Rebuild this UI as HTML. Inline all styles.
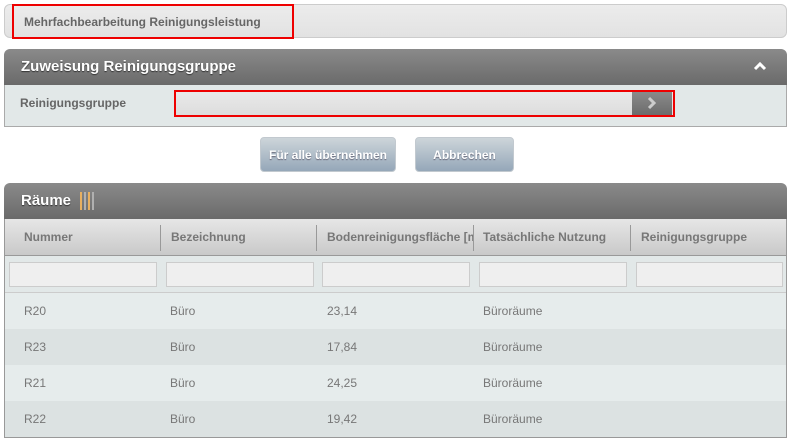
<!DOCTYPE html>
<html><head><meta charset="utf-8"><style>
*{box-sizing:border-box;margin:0;padding:0}
body{width:790px;height:440px;background:#fff;font-family:"Liberation Sans",Arial,sans-serif;position:relative;overflow:hidden}
.abs{position:absolute}
.top{left:4px;top:4px;width:783px;height:34px;background:linear-gradient(#ececec,#e2e2e2);border:1px solid #ccc;border-radius:6px}
.red{border:2px solid #e00}
.hdr{left:4px;width:783px;height:36px;background:linear-gradient(#8a8a8a,#6a6a6a);border-radius:6px 6px 0 0;color:#fff;font-weight:bold;font-size:15px;padding-left:17px;line-height:36px;text-shadow:0 1px 1px #333}
.btn{top:137px;height:35px;border-radius:4px;background:linear-gradient(#cdd5da,#95a7b9);border:1px solid #c2c9cf;color:#fff;font-weight:bold;font-size:12px;text-align:center;line-height:35px;text-shadow:0 1px 1px #667}
.col{position:absolute;top:0;height:37px;line-height:37px;font-size:12px;font-weight:bold;color:#777;padding-left:20px}
.sep{position:absolute;top:6px;width:1px;height:26px;background:#999}
.fi{position:absolute;top:6px;height:25px;background:#efefef;border:1px solid #ccc}
.row{position:absolute;left:0;width:781px;height:36px;font-size:12px;color:#777;line-height:36px}
.row span{position:absolute}
</style></head><body>
<div class="abs top"></div>
<div class="abs red" style="left:12px;top:4px;width:282px;height:35px"></div>
<div class="abs" style="left:24px;top:15px;font-size:12px;font-weight:bold;color:#666">Mehrfachbearbeitung Reinigungsleistung</div>

<div class="abs hdr" style="top:49px">Zuweisung Reinigungsgruppe</div>
<svg class="abs" style="left:752px;top:60px" width="16" height="12"><path d="M3 9 L8 4 L13 9" stroke="#fff" stroke-width="3" fill="none"/></svg>
<div class="abs" style="left:4px;top:85px;width:783px;height:42px;background:#e2e8e8;border:1px solid #aaa;border-top:none"></div>
<div class="abs" style="left:20px;top:96px;font-size:12px;font-weight:bold;color:#666">Reinigungsgruppe</div>
<div class="abs" style="left:174px;top:90px;width:501px;height:27px;background:linear-gradient(#eaeaea,#dcdcdc)"></div>
<div class="abs" style="left:632px;top:92px;width:40px;height:23px;background:linear-gradient(#8a8a8a,#6c6c6c)"></div>
<svg class="abs" style="left:645px;top:96px" width="14" height="14"><path d="M4 2 L9 7 L4 12" stroke="#ccc" stroke-width="3" fill="none"/></svg>
<div class="abs red" style="left:174px;top:90px;width:501px;height:27px"></div>

<div class="abs btn" style="left:260px;width:136px">Für alle übernehmen</div>
<div class="abs btn" style="left:415px;width:99px">Abbrechen</div>

<div class="abs hdr" style="top:183px">Räume</div>
<svg class="abs" style="left:80px;top:192px" width="18" height="18">
<rect x="0" y="0" width="2" height="18" fill="#e8b060"/><rect x="4" y="0" width="2" height="18" fill="#b0b0b0"/><rect x="8" y="0" width="2" height="18" fill="#e8b060"/><rect x="12" y="0" width="2" height="18" fill="#b0b0b0"/></svg>
<div class="abs" style="left:4px;top:219px;width:783px;height:219px;border:1px solid #999;border-top:none;background:#e2e8e8">
 <div style="position:absolute;left:0;top:0;width:781px;height:37px;background:linear-gradient(#e6e6e6,#c9c9c9);border-bottom:1px solid #999">
  <div class="col" style="left:-1px">Nummer</div>
  <div class="sep" style="left:155px"></div><div class="col" style="left:146px">Bezeichnung</div>
  <div class="sep" style="left:311px"></div><div class="col" style="left:302px;width:166px;overflow:hidden;white-space:nowrap">Bodenreinigungsfläche [m²]</div>
  <div class="sep" style="left:468px"></div><div class="col" style="left:458px">Tatsächliche Nutzung</div>
  <div class="sep" style="left:625px"></div><div class="col" style="left:616px">Reinigungsgruppe</div>
 </div>
 <div style="position:absolute;left:0;top:37px;width:781px;height:37px;border-bottom:1px solid #ccc">
  <div class="fi" style="left:4px;width:148px"></div>
  <div class="fi" style="left:161px;width:148px"></div>
  <div class="fi" style="left:317px;width:148px"></div>
  <div class="fi" style="left:474px;width:148px"></div>
  <div class="fi" style="left:631px;width:147px"></div>
 </div>
 <div class="row" style="top:74px;background:#e6ecec"><span style="left:19px">R20</span><span style="left:165px">Büro</span><span style="left:322px">23,14</span><span style="left:478px">Büroräume</span></div>
 <div class="row" style="top:110px;background:#dce2e2"><span style="left:19px">R23</span><span style="left:165px">Büro</span><span style="left:322px">17,84</span><span style="left:478px">Büroräume</span></div>
 <div class="row" style="top:146px;background:#e6ecec"><span style="left:19px">R21</span><span style="left:165px">Büro</span><span style="left:322px">24,25</span><span style="left:478px">Büroräume</span></div>
 <div class="row" style="top:182px;background:#dce2e2"><span style="left:19px">R22</span><span style="left:165px">Büro</span><span style="left:322px">19,42</span><span style="left:478px">Büroräume</span></div>
</div>
</body></html>
